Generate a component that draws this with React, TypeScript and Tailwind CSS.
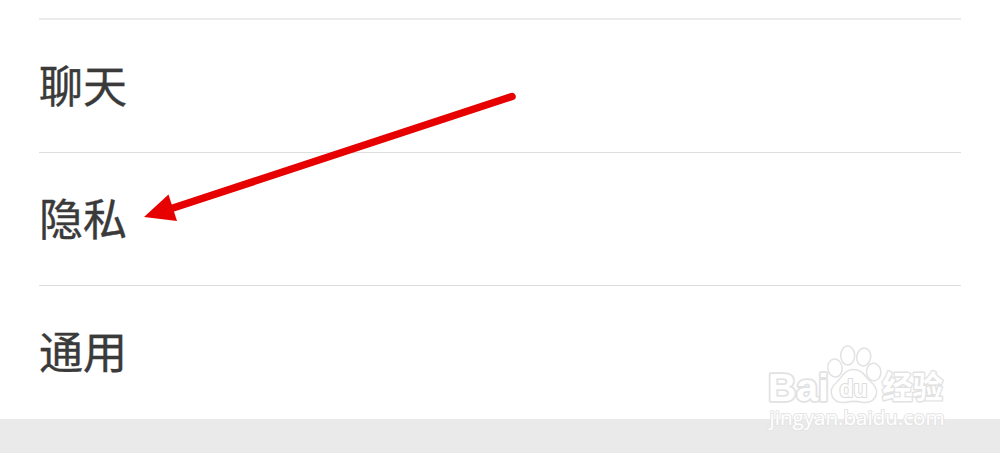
const rows = [
  { label: '聊天', line: 'border-t-2 border-[#ebebeb] h-[134px]' },
  { label: '隐私', line: 'border-t border-[#dedede] h-[133px]' },
  { label: '通用', line: 'border-t border-[#dedede] h-[134px]' },
];

function Arrow() {
  return (
    <svg className="pointer-events-none absolute top-0 left-0" width="1000" height="453" viewBox="0 0 1000 453" aria-hidden="true">
      <path d="M512 96.500L170 209" stroke="#e60000" strokeWidth="7.500" strokeLinecap="round" />
      <path d="M144 217L168.500 194.500L177 221Z" fill="#e60000" />
    </svg>
  );
}

function Watermark() {
  return (
    <svg
      className="pointer-events-none absolute top-[335px] left-[750px]"
      width="210"
      height="118"
      viewBox="0 0 210 118"
      fill="#fff"
      stroke="#e2e2e2"
      strokeWidth="1.5"
      strokeLinejoin="round"
    >
      <g className="[paint-order:stroke]">
        <text x="18" y="66" fontSize="38" fontWeight="700" textLength="61" lengthAdjust="spacingAndGlyphs" strokeWidth="3.500" className="font-['Liberation_Sans',sans-serif]">Bai</text>
        <text x="132" y="62.500" fontSize="31" fontWeight="700" textLength="61" lengthAdjust="spacingAndGlyphs" strokeWidth="2.800" className="font-['Noto_Sans_CJK_SC',sans-serif]">经验</text>
      </g>
      <ellipse cx="85" cy="33" rx="7.200" ry="9" transform="rotate(-8 85 33)" />
      <ellipse cx="97.700" cy="20.500" rx="7" ry="9.500" />
      <ellipse cx="113.700" cy="22" rx="7" ry="9" transform="rotate(10 113.700 22)" />
      <ellipse cx="123.700" cy="37" rx="7.200" ry="8.800" transform="rotate(-6 123.700 37)" />
      <path d="M103 34.500C95 34.500 92 42 87 47C82 51 80 56 82 61C84 66 89 68 95 67.500C101 66 107 66 113 67.500C120 68 125 65 126.500 59C128 53 123 49 118 44C114 40 112 34.500 103 34.500Z" />
      <text x="89.500" y="62" fontSize="24" fontWeight="700" textLength="28" lengthAdjust="spacingAndGlyphs" stroke="#dcdcdc" strokeWidth="2.200" className="font-['Liberation_Sans',sans-serif] [paint-order:stroke]">du</text>
      <text x="19.500" y="89.500" fontSize="19.500" fontWeight="500" textLength="175" lengthAdjust="spacingAndGlyphs" stroke="#e5e5e5" strokeWidth="2" className="font-['Open_Sans',sans-serif] [paint-order:stroke]">jingyan.baidu.com</text>
    </svg>
  );
}

export default function App() {
  return (
    <main className="relative flex h-[453px] w-[1000px] flex-col overflow-hidden bg-white pt-[18px] font-['Noto_Sans_CJK_SC',sans-serif] text-[#3a3a3a]">
      <div className="flex flex-col px-[39px]">
        {rows.map(({ label, line }) => (
          <div key={label} className={`flex items-center pb-[5px] ${line}`}>
            <span className="text-[44px] leading-[64px] [-webkit-text-stroke:0.4px_#3a3a3a]">{label}</span>
          </div>
        ))}
      </div>
      <div className="flex-1 bg-[#eaeaea]" />
      <Arrow />
      <Watermark />
    </main>
  );
}
